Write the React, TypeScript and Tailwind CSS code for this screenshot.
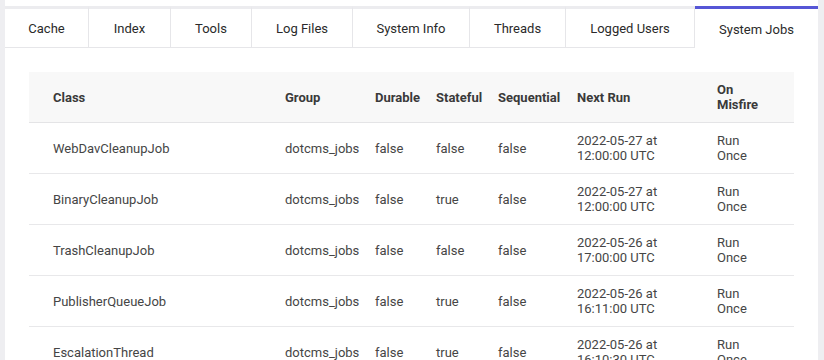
import React from 'react';

const tabs = [
  { label: 'Cache', w: 'w-[84px]' },
  { label: 'Index', w: 'w-[82px]' },
  { label: 'Tools', w: 'w-[81px]' },
  { label: 'Log Files', w: 'w-[101px]' },
  { label: 'System Info', w: 'w-[117px]' },
  { label: 'Threads', w: 'w-[96px]' },
  { label: 'Logged Users', w: 'w-[129px]' },
  { label: 'System Jobs', w: 'w-[123px]' },
];

const jobs = [
  ['WebDavCleanupJob', 'dotcms_jobs', 'false', 'false', 'false', '2022-05-27 at 12:00:00 UTC', 'Run Once'],
  ['BinaryCleanupJob', 'dotcms_jobs', 'false', 'true', 'false', '2022-05-27 at 12:00:00 UTC', 'Run Once'],
  ['TrashCleanupJob', 'dotcms_jobs', 'false', 'false', 'false', '2022-05-26 at 17:00:00 UTC', 'Run Once'],
  ['PublisherQueueJob', 'dotcms_jobs', 'false', 'true', 'false', '2022-05-26 at 16:11:00 UTC', 'Run Once'],
  ['EscalationThread', 'dotcms_jobs', 'false', 'true', 'false', '2022-05-26 at 16:10:30 UTC', 'Run Once'],
];

const headers = ['Class', 'Group', 'Durable', 'Stateful', 'Sequential', 'Next Run', 'On Misfire'];

// column layout: first cell padded, last two narrowed so the text wraps
const cols = 'grid grid-cols-[256px_90px_61px_62px_79px_140px_78px] items-center';
const cellPad = ['pl-6', '', '', '', '', 'pr-10', 'pr-8'];

export default function App() {
  return (
    <div
      className="flex h-[360px] w-[824px] overflow-hidden bg-white text-[13px] leading-[15px]"
      style={{ fontFamily: 'Roboto, "Liberation Sans", sans-serif' }}
    >
      <div className="w-[5px] shrink-0 bg-[#eeeef1]" />

      <div className="flex w-[813px] flex-col pt-[6px]">
        {/* Tabs */}
        <div className="flex h-[42px] border-b border-[#e6e6e9]">
          {tabs.map((t, i) => {
            const active = i === tabs.length - 1;
            return (
              <div
                key={t.label}
                className={`${t.w} flex items-center justify-center border-t-[3px] pt-px text-[#2a2a2a] ${
                  active
                    ? '-mb-px h-[42px] border-[#5656d6] bg-white'
                    : 'border-t-[#ececef] border-r border-r-[#e6e6e9]'
                }`}
              >
                {t.label}
              </div>
            );
          })}
        </div>

        {/* Table */}
        <div className="px-6 pt-6">
          <div className={`${cols} h-[51px] border-b border-[#e4e4e6] bg-[#f8f8f8] font-bold text-[#3a3a3a]`}>
            {headers.map((h, i) => (
              <div key={h} className={cellPad[i]}>
                {h}
              </div>
            ))}
          </div>
          {jobs.map((row) => (
            <div key={row[0]} className={`${cols} h-[51px] border-b border-[#e8e8ea] text-[#454545]`}>
              {row.map((c, i) => (
                <div key={i} className={cellPad[i]}>
                  {c}
                </div>
              ))}
            </div>
          ))}
        </div>
      </div>

      <div className="w-[6px] shrink-0 bg-[#eeeef1]" />
    </div>
  );
}
